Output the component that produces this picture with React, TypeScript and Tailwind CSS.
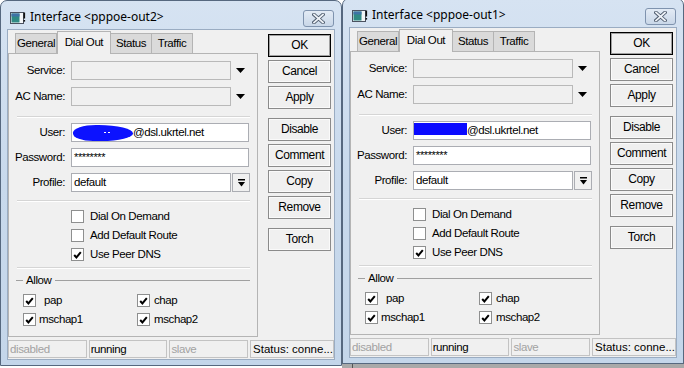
import React from "react";

const F = "font-['Liberation_Sans',Arial,sans-serif] tracking-[-0.4px]";

function TitleIcon() {
  return (
    <svg width="16" height="13" viewBox="0 0 16 13">
      <rect x="0.5" y="0.5" width="13" height="11" fill="#f3f5f7" stroke="#4b5260" />
      <rect x="1.5" y="1.5" width="8" height="9" fill="#2f8a84" />
      <rect x="1.5" y="1.5" width="8" height="3" fill="#3f73a6" />
      <rect x="13.5" y="0.5" width="1.6" height="6" fill="#111" />
      <rect x="13.5" y="8" width="1.6" height="1.6" fill="#111" />
    </svg>
  );
}

function CloseGlyph() {
  return (
    <svg width="13" height="11" viewBox="0 0 13 11">
      <path d="M2 1.5 L11 9.5 M11 1.5 L2 9.5" stroke="#4e5b6d" strokeWidth="3.6" strokeLinecap="square" />
      <path d="M2 1.5 L11 9.5 M11 1.5 L2 9.5" stroke="#eef2f7" strokeWidth="1.7" strokeLinecap="square" />
    </svg>
  );
}

function DropArrow() {
  return (
    <svg width="9" height="5" viewBox="0 0 9 5" className="shrink-0">
      <polygon points="0,0 9,0 4.5,5" fill="#000" />
    </svg>
  );
}

function BarArrow() {
  return (
    <svg width="7" height="8" viewBox="0 0 7 8">
      <rect x="0" y="0" width="7" height="1.5" fill="#000" />
      <polygon points="0,3 7,3 3.5,7.5" fill="#000" />
    </svg>
  );
}

function CheckMark() {
  return (
    <svg width="9" height="8" viewBox="0 0 9 8">
      <path d="M1.2 4 L3.4 6.4 L7.8 1.2" stroke="#000" strokeWidth="2" fill="none" />
    </svg>
  );
}

function Box({ checked }: { checked?: boolean }) {
  return (
    <span className="w-[13px] h-[13px] shrink-0 border border-[#8e8f8f] bg-white flex items-center justify-center">
      {checked && <CheckMark />}
    </span>
  );
}

function Btn({ label, ok, mt }: { label: string; ok?: boolean; mt: string }) {
  return (
    <div
      className={`${mt} h-[23px] w-[63px] flex items-center justify-center bg-[#f0f0f0] text-black text-[12px] ${
        ok ? "border border-black shadow-[inset_0_0_0_1px_#a0a0a0]" : "border border-[#8b8b8b] shadow-[inset_0_0_0_1px_#fafafa]"
      }`}
    >
      {label}
    </div>
  );
}

function Sep({ mt }: { mt: string }) {
  return <div className={`${mt} ml-[8px] mr-[7px] h-[2px] border-t border-[#d5d5d5] border-b border-b-white`} />;
}

function Window({ title, variant }: { title: string; variant: "blob" | "rect" }) {
  return (
    <div className="w-[342px] h-[366px] shrink-0 border border-[#56687f] rounded-t-[7px] bg-gradient-to-b from-[#d6e3f2] via-[#c8d9ec] to-[#c4d6ea] flex flex-col px-[7px] pb-[6px]">
      {/* title bar */}
      <div className="h-[29px] flex items-start shrink-0">
        <div className="ml-[2px] mt-[11px]">
          <TitleIcon />
        </div>
        <div className="ml-[4px] mt-[8px] text-[12px] leading-[16px] text-black font-['Noto_Sans','Open_Sans',sans-serif] whitespace-nowrap">
          {title}
        </div>
        <div className="ml-auto mt-[9px] w-[31px] h-[17px] rounded-[3px] border border-[#7f93ae] bg-gradient-to-b from-[#e3ebf5] to-[#c9d7e8] flex items-center justify-center">
          <CloseGlyph />
        </div>
      </div>

      {/* client */}
      <div className={`flex-1 bg-[#f0f0f0] shadow-[0_0_0_1px_#9aacc2] flex flex-col ${F} text-[11.5px] leading-[15px] text-black whitespace-nowrap`}>
        <div className="flex h-[307px]">
          <div className="w-[250px] flex flex-col">
            {/* tabs */}
            <div className="h-[23px] flex items-end pl-[7px] relative z-10">
              <div className="w-[42px] h-[20px] border border-b-0 border-[#b4b4b4] bg-[#dadada] flex items-center justify-center">
                General
              </div>
              <div className="w-[54px] h-[23px] -mb-px border border-b-0 border-[#b4b4b4] bg-[#f0f0f0] flex items-start justify-center pt-[3px]">
                Dial Out
              </div>
              <div className="w-[41px] h-[20px] border border-b-0 border-l-0 border-[#b4b4b4] bg-[#dadada] flex items-center justify-center">
                Status
              </div>
              <div className="w-[41px] h-[20px] border border-b-0 border-l-0 border-[#b4b4b4] bg-[#dadada] flex items-center justify-center">
                Traffic
              </div>
            </div>
            {/* panel */}
            <div className="flex-1 border border-[#b4b4b4] bg-[#f0f0f0] flex flex-col">
              <div className="mt-[7px] flex items-center h-[19px]">
                <div className="w-[56px] text-right">Service:</div>
                <div className="ml-[6px] w-[160px] h-[19px] border border-[#b9b9b9] bg-[#f0f0f0]" />
                <div className="ml-[5px]">
                  <DropArrow />
                </div>
              </div>
              <div className="mt-[7px] flex items-center h-[19px]">
                <div className="w-[56px] text-right">AC Name:</div>
                <div className="ml-[6px] w-[160px] h-[19px] border border-[#b9b9b9] bg-[#f0f0f0]" />
                <div className="ml-[5px]">
                  <DropArrow />
                </div>
              </div>
              <Sep mt="mt-[10px]" />
              <div className="mt-[5px] flex items-center h-[19px]">
                <div className="w-[56px] text-right">User:</div>
                <div className="ml-[6px] w-[178px] h-[19px] border border-[#abadb3] bg-white flex items-center overflow-hidden">
                  {variant === "blob" ? (
                    <>
                      <span className="relative ml-[1px] w-[60px] h-[16px] shrink-0 bg-[#0c12ff] rounded-[40%_60%_55%_35%/50%_55%_50%_50%]">
                        <span className="absolute left-[31px] top-[7px] w-[2px] h-[1px] bg-white" />
                        <span className="absolute left-[35px] top-[7px] w-[2px] h-[1px] bg-white" />
                      </span>
                      <span>@dsl.ukrtel.net</span>
                    </>
                  ) : (
                    <>
                      <span className="relative -ml-[2px] self-start mt-[1px] w-[55px] h-[12px] shrink-0 bg-[#0a0aff]" />
                      <span>@dsl.ukrtel.net</span>
                    </>
                  )}
                </div>
              </div>
              <div className="mt-[6px] flex items-center h-[19px]">
                <div className="w-[56px] text-right">Password:</div>
                <div className="ml-[6px] w-[178px] h-[19px] border border-[#abadb3] bg-white flex items-start pl-[2px] pt-[1px] text-[11px]">
                  ********
                </div>
              </div>
              <div className="mt-[6px] flex items-center h-[19px]">
                <div className="w-[56px] text-right">Profile:</div>
                <div className="ml-[6px] w-[160px] h-[19px] border border-[#abadb3] bg-white flex items-center pl-[2px]">
                  default
                </div>
                <div className="w-[18px] h-[19px] ml-[1px] border border-[#abadb3] bg-[#f0f0f0] flex items-center justify-center">
                  <BarArrow />
                </div>
              </div>
              <Sep mt="mt-[8px]" />
              <div className="mt-[5px] flex items-center h-[19px] pl-[62px]">
                <Box />
                <span className="ml-[6px]">Dial On Demand</span>
              </div>
              <div className="flex items-center h-[19px] pl-[62px]">
                <Box />
                <span className="ml-[6px]">Add Default Route</span>
              </div>
              <div className="flex items-center h-[19px] pl-[62px]">
                <Box checked />
                <span className="ml-[6px]">Use Peer DNS</span>
              </div>
              <Sep mt="mt-[3px]" />
              <div className="mt-[5px] h-[13px] flex items-center">
                <div className="ml-[7px] w-[7px] h-px bg-[#a0a0a0]" />
                <span className="ml-[3px]">Allow</span>
                <div className="ml-[4px] mr-[7px] flex-1 h-px bg-[#a0a0a0]" />
              </div>
              <div className="mt-[4px] flex items-center h-[19px] pl-[14px]">
                <div className="w-[114px] flex items-center">
                  <Box checked />
                  <span className="ml-[8px]">pap</span>
                </div>
                <Box checked />
                <span className="ml-[4px]">chap</span>
              </div>
              <div className="flex items-center h-[19px] pl-[14px]">
                <div className="w-[114px] flex items-center">
                  <Box checked />
                  <span className="ml-[3px]">mschap1</span>
                </div>
                <Box checked />
                <span className="ml-[4px]">mschap2</span>
              </div>
            </div>
          </div>
          {/* buttons */}
          <div className="ml-[10px] flex flex-col">
            <Btn label="OK" ok mt="mt-[4px]" />
            <Btn label="Cancel" mt="mt-[3px]" />
            <Btn label="Apply" mt="mt-[3px]" />
            <Btn label="Disable" mt="mt-[9px]" />
            <Btn label="Comment" mt="mt-[3px]" />
            <Btn label="Copy" mt="mt-[3px]" />
            <Btn label="Remove" mt="mt-[3px]" />
            <Btn label="Torch" mt="mt-[9px]" />
          </div>
        </div>
        {/* status bar */}
        <div className="mt-[3px] h-[18px] flex gap-[2px]">
          <div className="w-[79px] border border-[#c3c3c3] flex items-center pl-[1px] text-[#a2a2a2]">disabled</div>
          <div className="w-[79px] border border-[#c3c3c3] flex items-center pl-[1px]">running</div>
          <div className="w-[79px] border border-[#c3c3c3] flex items-center pl-[1px] text-[#a2a2a2]">slave</div>
          <div className="flex-1 border border-[#c3c3c3] flex items-center pl-[2px] tracking-[0px]">Status: conne...</div>
        </div>
      </div>
    </div>
  );
}

export default function App() {
  return (
    <div className="w-[684px] h-[368px] bg-white relative overflow-hidden">
      <div className="absolute left-[342px] top-[363px] w-[342px] h-[5px] bg-[#a9a9a9] border-t border-[#6f6f6f]" />
      <div className="absolute left-[352px] top-[363px] w-px h-[5px] bg-[#555]" />
      <div className="relative flex items-start">
        <Window title="Interface <pppoe-out2>" variant="blob" />
        <div className="-mt-[2px]">
          <Window title="Interface <pppoe-out1>" variant="rect" />
        </div>
      </div>
    </div>
  );
}
